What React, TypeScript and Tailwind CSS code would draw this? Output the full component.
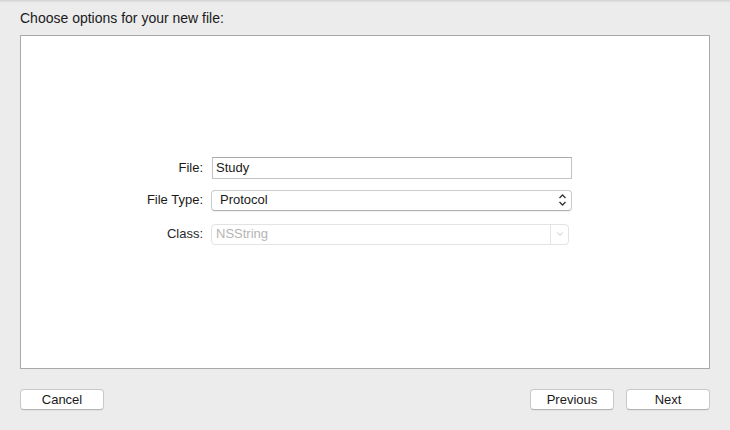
import { ChevronDown } from 'lucide-react';

function UpDown() {
  return (
    <svg width="9" height="14" viewBox="0 0 9 14" className="shrink-0">
      <path d="M1.5 5 L4.5 2 L7.5 5" fill="none" stroke="#333" strokeWidth="1.3" />
      <path d="M1.5 9 L4.5 12 L7.5 9" fill="none" stroke="#333" strokeWidth="1.3" />
    </svg>
  );
}

function Button({ label }: { label: string }) {
  return (
    <button className="w-[84px] h-[21px] rounded-[4px] bg-white border border-[#c9c9c9] border-b-[#b4b4b4] shadow-[0_1px_0_rgba(0,0,0,0.04)] text-[13px] text-[#1a1a1a] leading-none">
      {label}
    </button>
  );
}

export default function App() {
  return (
    <div className="w-[730px] h-[430px] bg-[#ececec] relative font-['Liberation_Sans',Arial,sans-serif] text-[#1a1a1a]">
      <div className="h-[3px] bg-gradient-to-b from-[#d2d2d2] to-[#ececec]" />
      <div className="pl-[20px] pt-[7px] h-[32px] text-[14px] leading-[17px]">Choose options for your new file:</div>

      <div className="mx-[20px] h-[334px] bg-white border border-[#a9a9a9] pt-[121px]">
        <div className="flex items-center h-[22px]">
          <div className="w-[182px] text-right text-[13px]">File:</div>
          <div className="ml-[9px] w-[360px] h-[22px] border border-[#c3c3c3] border-t-[#a8a8a8] flex items-center pl-[3px] text-[13px]">
            Study
          </div>
        </div>

        <div className="flex items-center h-[22px] mt-[10px]">
          <div className="w-[182px] text-right text-[13px]">File Type:</div>
          <div className="ml-[8px] w-[361px] h-[21px] rounded-[4px] bg-white border border-[#cbcbcb] border-b-[#b2b2b2] shadow-[0_1px_1px_rgba(0,0,0,0.06)] flex items-center justify-between pl-[8px] pr-[4px] text-[13px]">
            <span>Protocol</span>
            <UpDown />
          </div>
        </div>

        <div className="flex items-center h-[22px] mt-[12px]">
          <div className="w-[182px] text-right text-[13px] text-[#2a2a2a]">Class:</div>
          <div className="ml-[8px] w-[358px] h-[21px] rounded-[4px] bg-white border border-[#e3e3e3] flex items-center text-[13px]">
            <span className="flex-1 pl-[4px] text-[#b4b4b4]">NSString</span>
            <div className="w-[18px] h-full border-l border-[#e3e3e3] flex items-center justify-center">
              <ChevronDown size={10} strokeWidth={2} color="#b8b8b8" />
            </div>
          </div>
        </div>
      </div>

      <div className="flex items-center px-[20px] mt-[20px]">
        <Button label="Cancel" />
        <div className="flex-1" />
        <Button label="Previous" />
        <div className="w-[12px]" />
        <Button label="Next" />
      </div>
    </div>
  );
}
